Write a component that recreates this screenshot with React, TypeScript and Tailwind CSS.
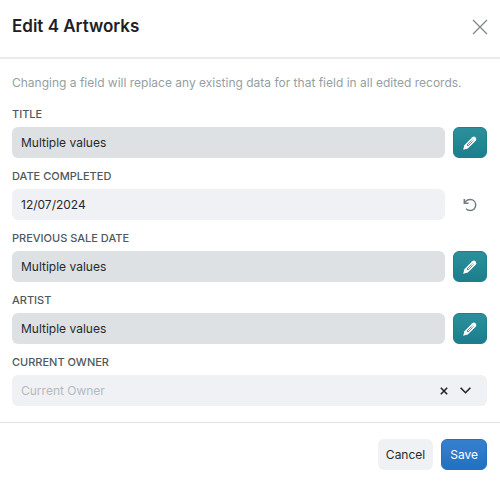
import { useState } from "react";

type Field = {
  id: string;
  label: string;
  value: string;
  edited?: boolean;
};

const fields: Field[] = [
  { id: "title", label: "Title", value: "Multiple values" },
  { id: "date-completed", label: "Date Completed", value: "12/07/2024", edited: true },
  { id: "previous-sale-date", label: "Previous Sale Date", value: "Multiple values" },
  { id: "artist", label: "Artist", value: "Multiple values" },
];

const labelClass = "block text-[11px] leading-[14px] font-medium uppercase text-[#4f585e]";

function PencilIcon() {
  return (
    <svg width="16" height="16" viewBox="0 0 16 16" fill="none" aria-hidden="true">
      <path
        d="M1.2 14.8 L2.4 10.2 L10.3 2.3 Q12 0.8 13.6 2.4 Q15.2 4 13.7 5.7 L5.8 13.6 Z"
        fill="#fff"
      />
      <path d="M5 10 L9.3 5.7 L10.3 6.7 L6 11 Z" stroke="#20818e" strokeWidth="0.8" />
      <path d="M10 3.8 L12.2 6" stroke="#20818e" strokeWidth="0.4" />
    </svg>
  );
}

function UndoIcon() {
  return (
    <svg width="14" height="14" viewBox="0 0 14 14" fill="none" stroke="#757c80" strokeWidth="1.5" aria-hidden="true">
      <path d="M1.3 1 V5.2 H5.6" />
      <path d="M1.5 5 C2.8 2.7 4.8 1.6 7.3 1.6 C10.4 1.6 12.7 4 12.7 7 C12.7 10.1 10.3 12.5 7.3 12.5 C5.5 12.5 4.2 11.9 3.1 10.7" />
    </svg>
  );
}

export default function App() {
  const [values, setValues] = useState<Record<string, string>>(
    Object.fromEntries(fields.map((f) => [f.id, f.value]))
  );
  const [owner, setOwner] = useState("");

  return (
    <div
      role="dialog"
      aria-labelledby="dialog-title"
      className="min-h-screen bg-white font-['Inter',sans-serif] text-xs leading-5 text-[#25292c]"
    >
      <header className="flex items-center justify-between border-b-2 border-[#e8ecec] px-3 pt-[14px] pb-[18px]">
        <h1 id="dialog-title" className="text-[17px] leading-[25px] font-semibold text-[#1d2024]">
          Edit 4 Artworks
        </h1>
        <button type="button" aria-label="Close">
          <svg width="16" height="16" viewBox="0 0 16 16" stroke="#7f8789" strokeWidth="1.3" aria-hidden="true">
            <path d="M1 1 L15 15 M15 1 L1 15" />
          </svg>
        </button>
      </header>

      <form id="edit-form" onSubmit={(e) => e.preventDefault()}>
        <div className="pt-[14px] pr-[13px] pb-4 pl-3">
          <p className="mb-[14px] text-[#959fa3]">
            Changing a field will replace any existing data for that field in all edited records.
          </p>

          <div className="flex flex-col gap-[11px]">
            {fields.map((field) => (
              <div key={field.id} className="flex flex-col gap-1.5">
                <label htmlFor={field.id} className={labelClass}>
                  {field.label}
                </label>
                <div className="flex gap-2">
                  <input
                    id={field.id}
                    type="text"
                    value={values[field.id]}
                    readOnly={!field.edited}
                    onChange={(e) => setValues({ ...values, [field.id]: e.target.value })}
                    className={`h-[31px] min-w-0 flex-1 rounded-md px-[9px] ${
                      field.edited ? "bg-[#f0f1f5]" : "bg-[#dde1e4]"
                    }`}
                  />
                  {field.edited ? (
                    <button
                      type="button"
                      aria-label={`Reset ${field.label}`}
                      className="flex h-[31px] w-[34px] items-center justify-center"
                    >
                      <UndoIcon />
                    </button>
                  ) : (
                    <button
                      type="button"
                      aria-label={`Edit ${field.label}`}
                      className="flex h-[31px] w-[34px] items-center justify-center rounded-md border border-[#1b7f8c] bg-linear-to-b from-[#2b909c] to-[#1c7e8c]"
                    >
                      <PencilIcon />
                    </button>
                  )}
                </div>
              </div>
            ))}

            <div className="flex flex-col gap-1.5">
              <label htmlFor="current-owner" className={labelClass}>
                Current Owner
              </label>
              <div className="relative">
                <select
                  id="current-owner"
                  value={owner}
                  onChange={(e) => setOwner(e.target.value)}
                  className="block h-[31px] w-full appearance-none rounded-md bg-[#f0f1f5] px-[9px] text-[#b4babe]"
                >
                  <option value="">Current Owner</option>
                </select>
                <div className="pointer-events-none absolute inset-y-0 right-4 flex items-center gap-3">
                  <button
                    type="button"
                    aria-label="Clear current owner"
                    onClick={() => setOwner("")}
                    className="pointer-events-auto"
                  >
                    <svg width="8" height="8" viewBox="0 0 8 8" stroke="#202427" strokeWidth="1.6" aria-hidden="true">
                      <path d="M0.8 0.8 L7.2 7.2 M7.2 0.8 L0.8 7.2" />
                    </svg>
                  </button>
                  <svg width="11" height="7" viewBox="0 0 11 7" fill="none" stroke="#202427" strokeWidth="1.6" aria-hidden="true">
                    <path d="M0.6 0.8 L5.5 5.7 L10.4 0.8" />
                  </svg>
                </div>
              </div>
            </div>
          </div>
        </div>
      </form>

      <footer className="flex justify-end gap-2 border-t border-[#dfe2e4] py-4 pr-[13px] pl-3">
        <button type="button" className="h-[31px] rounded-md bg-[#f0f1f5] px-2">
          Cancel
        </button>
        <button
          type="submit"
          form="edit-form"
          className="h-[31px] rounded-md border border-[#2570bd] bg-linear-to-b from-[#3681cf] to-[#2370c0] px-2 text-white"
        >
          Save
        </button>
      </footer>
    </div>
  );
}
